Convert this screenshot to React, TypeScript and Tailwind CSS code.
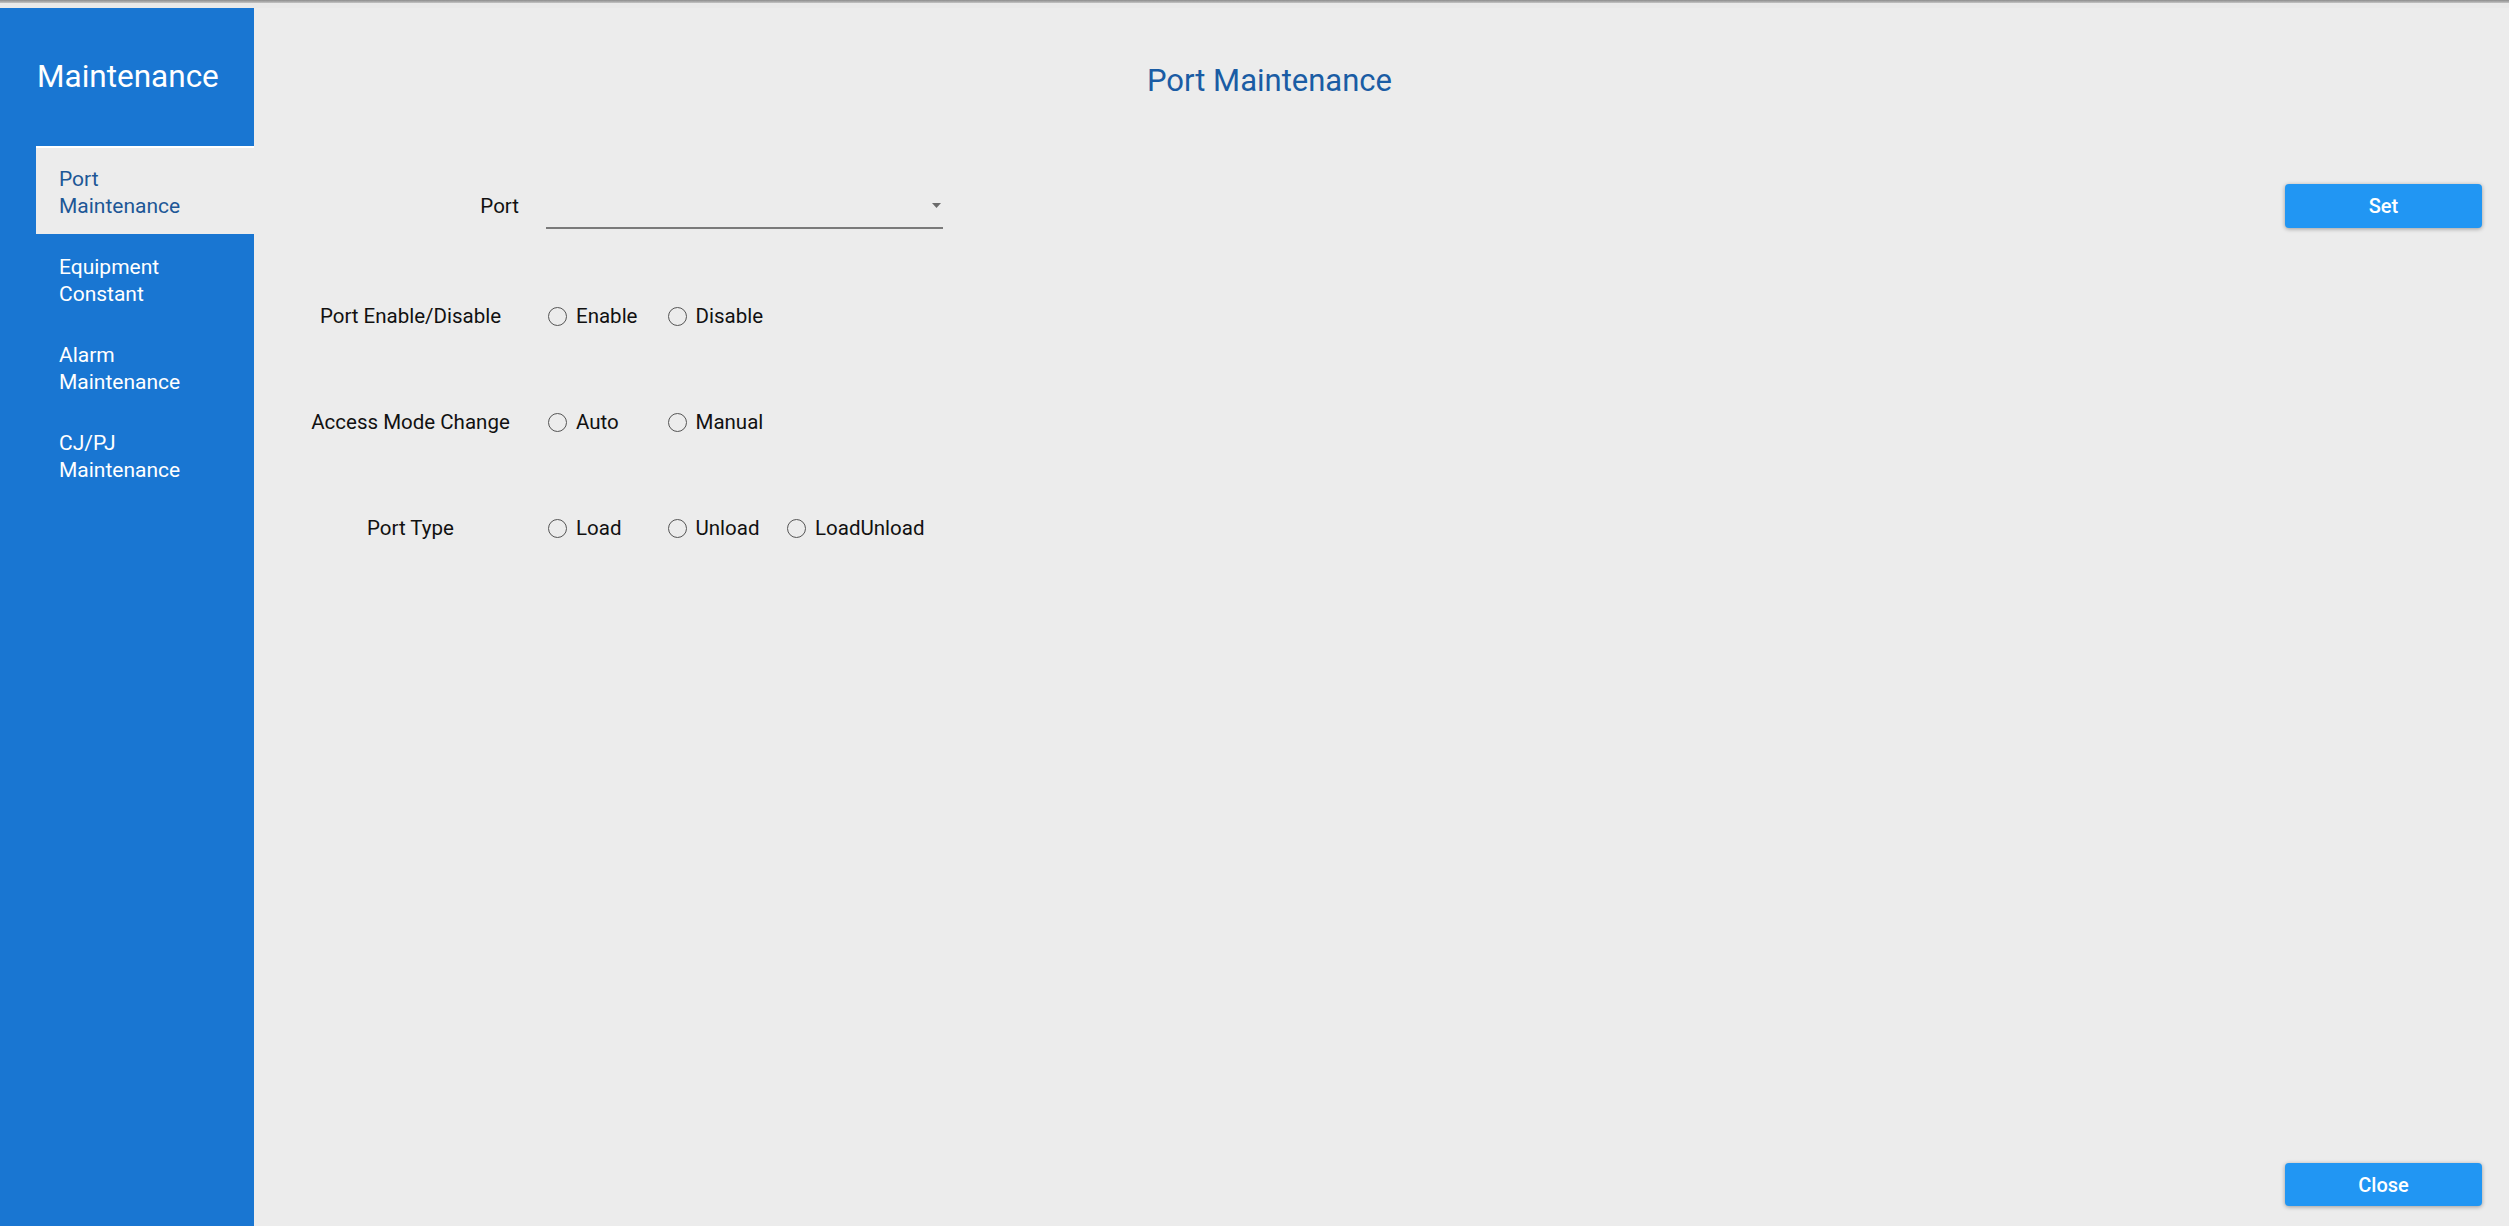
import { useState } from 'react';

const menu = ['Port Maintenance', 'Equipment Constant', 'Alarm Maintenance', 'CJ/PJ Maintenance'];

const radioRows = [
  { label: 'Port Enable/Disable', options: ['Enable', 'Disable'] },
  { label: 'Access Mode Change', options: ['Auto', 'Manual'] },
  { label: 'Port Type', options: ['Load', 'Unload', 'LoadUnload'] },
];

function Radio({ label, checked, onClick }: { label: string; checked: boolean; onClick: () => void }) {
  return (
    <button onClick={onClick} className="flex w-[119.5px] items-center gap-[9px] text-left">
      <span className="flex h-[19px] w-[19px] shrink-0 items-center justify-center rounded-full border-[1.5px] border-[#555]">
        {checked && <span className="h-[9px] w-[9px] rounded-full bg-[#333]" />}
      </span>
      <span className="text-[20.5px] leading-[26px] text-[#111]">{label}</span>
    </button>
  );
}

export default function App() {
  const [active, setActive] = useState(0);
  const [values, setValues] = useState<Record<string, string>>({});

  return (
    <div className="flex h-screen w-full flex-col overflow-hidden bg-[#ececec] font-['Roboto','Liberation_Sans',sans-serif]">
      {/* window top edge */}
      <div className="h-[3px] bg-gradient-to-b from-[#8c8c8c] to-[#c4c4c4]" />
      <div className="h-[5px] bg-[#e9e9e9]" />

      <div className="flex min-h-0 flex-1">
        {/* sidebar */}
        <aside className="flex w-[254px] shrink-0 flex-col bg-[#1976d2]">
          <div className="h-[138px] pl-[37px] pt-[49px] text-[31.5px] leading-[40px] text-white">Maintenance</div>
          <nav className="flex flex-col">
            {menu.map((item, i) => {
              const [first, ...rest] = item.split(' ');
              return (
                <button
                  key={item}
                  onClick={() => setActive(i)}
                  className={
                    'ml-[36px] flex h-[88px] flex-col border-t-2 pb-[14px] pl-[23px] pt-[18px] text-left text-[21px] leading-[27px] ' +
                    (active === i ? 'border-white bg-[#ececec] text-[#1d5796]' : 'border-transparent text-white')
                  }
                >
                  <span>{first}</span>
                  <span>{rest.join(' ')}</span>
                </button>
              );
            })}
          </nav>
        </aside>

        {/* content */}
        <main className="flex min-w-0 flex-1">
          <div className="flex min-w-0 flex-1 flex-col">
            <h1 className="pt-[53px] text-center text-[31px] font-normal leading-[40px] text-[#1a5ca4]">Port Maintenance</h1>

            <div className="mt-[52px] flex flex-col">
              {/* port select */}
              <div className="flex h-[107px] items-center">
                <div className="ml-[36px] w-[241px] pr-[12px] text-right text-[20.5px] text-[#111]">Port</div>
                <div className="ml-[15px] flex h-[44px] w-[397px] items-center justify-end border-b-2 border-[#7a7a7a] pr-[2px]">
                  <svg width="9" height="5" viewBox="0 0 9 5">
                    <path d="M0 0 L9 0 L4.5 5 Z" fill="#6b6b6b" />
                  </svg>
                </div>
              </div>

              <div className="flex flex-col pt-[3px]">
                {radioRows.map((row) => (
                  <div key={row.label} className="flex h-[106px] items-center">
                    <div className="ml-[36px] w-[241px] text-center text-[20.5px] text-[#111]">{row.label}</div>
                    <div className="ml-[17px] flex items-center">
                      {row.options.map((opt) => (
                        <Radio
                          key={opt}
                          label={opt}
                          checked={values[row.label] === opt}
                          onClick={() => setValues({ ...values, [row.label]: opt })}
                        />
                      ))}
                    </div>
                  </div>
                ))}
              </div>
            </div>
          </div>

          {/* actions */}
          <div className="mr-[27px] flex w-[197px] shrink-0 flex-col justify-between pb-[20px] pt-[176px]">
            <button className="h-[44px] rounded-[4px] bg-[#2196f3] text-[20px] font-medium text-white shadow-[0_1px_4px_rgba(0,0,0,0.35)]">
              Set
            </button>
            <button className="h-[43px] rounded-[4px] bg-[#2196f3] text-[20px] font-medium text-white shadow-[0_1px_4px_rgba(0,0,0,0.35)]">
              Close
            </button>
          </div>
        </main>
      </div>
    </div>
  );
}
